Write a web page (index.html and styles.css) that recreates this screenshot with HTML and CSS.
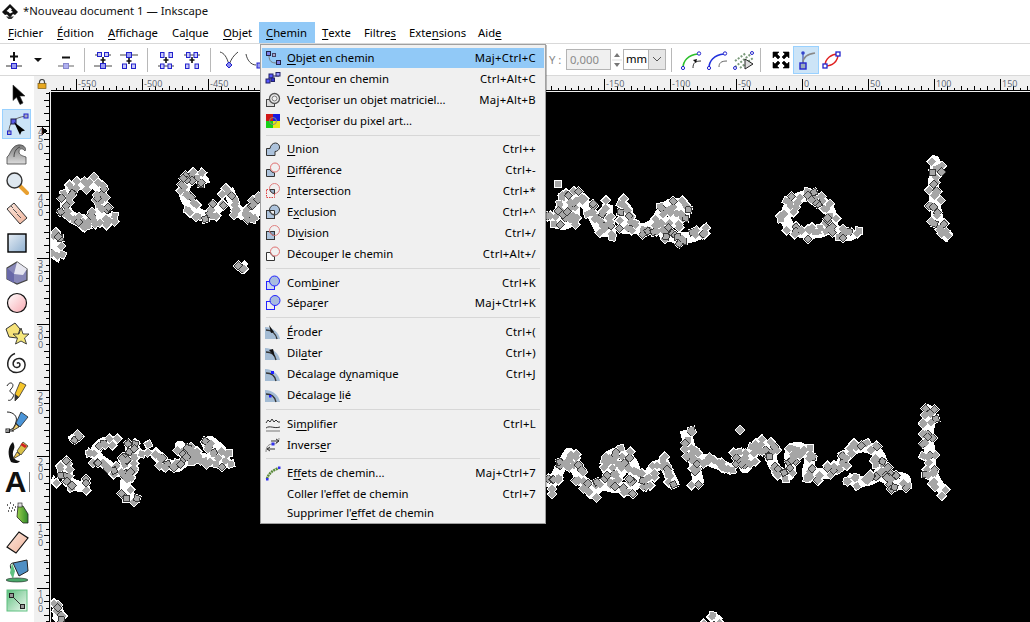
FILE: index.html
```html
<!DOCTYPE html>
<html lang="fr">
<head>
<meta charset="utf-8">
<title>*Nouveau document 1 — Inkscape</title>
<link rel="stylesheet" href="styles.css">
</head>
<body>
<svg class="defs" aria-hidden="true">
  <defs>
    <linearGradient id="gGrey" x1="0" y1="0" x2="0" y2="1"><stop offset="0" stop-color="#777"/><stop offset="1" stop-color="#ddd"/></linearGradient>
    <linearGradient id="gBlue" x1="0" y1="0" x2="1" y2="1"><stop offset="0" stop-color="#e6edf5"/><stop offset="1" stop-color="#8fb0d0"/></linearGradient>
    <linearGradient id="gPink" x1="0" y1="0" x2="1" y2="1"><stop offset="0" stop-color="#fff"/><stop offset="1" stop-color="#f8a8b0"/></linearGradient>
    <linearGradient id="gPeach" x1="0" y1="0" x2="1" y2="1"><stop offset="0" stop-color="#fbe6dc"/><stop offset="1" stop-color="#f0b49c"/></linearGradient>
    <linearGradient id="gGreen" x1="0" y1="0" x2="1" y2="1"><stop offset="0" stop-color="#5fbf7f"/><stop offset="1" stop-color="#f0faf2"/></linearGradient>
    <linearGradient id="gCan" x1="0" y1="0" x2="1" y2="0"><stop offset="0" stop-color="#9ad04a"/><stop offset="1" stop-color="#2f8a2a"/></linearGradient>
  </defs>
</svg>

<header class="titlebar">
  <svg class="applogo" viewBox="0 0 16 15"><path d="M8 0L16 8 13 11 11 10 8 13.500 5 10.500 3 11 0 8Z" fill="#111"/><path d="M4.500 7L8 3.500 10 5.500 9 6.500 11 8 8 9.500 6.500 8Z" fill="#fff"/><path d="M4 12.500h8l-2.500 2.500h-3Z" fill="#333"/></svg>
  <span class="apptitle">*Nouveau document 1 — Inkscape</span>
</header>

<nav class="menubar">
  <span class="mb mb-fichier"><u>F</u>ichier</span>
  <span class="mb mb-edition"><u>É</u>dition</span>
  <span class="mb mb-affichage"><u>A</u>ffichage</span>
  <span class="mb mb-calque">Ca<u>l</u>que</span>
  <span class="mb mb-objet"><u>O</u>bjet</span>
  <div class="mb-open">
    <span class="mb mb-chemin"><u>C</u>hemin</span>
    <ul class="menu">
      <li class="item active"><svg class="mi" viewBox="0 0 16 16"><path d="M4 5C4 12 7 13 12 13" fill="none" stroke="#777"/><rect x="1.500" y="1.500" width="4" height="4" fill="#7a80e8" stroke="#224"/><rect x="11.500" y="10.500" width="4" height="4" fill="#7a80e8" stroke="#224"/><rect x="7.500" y="3.500" width="3" height="3" fill="#aac" stroke="#446"/></svg><span class="lbl"><u>O</u>bjet en chemin</span><span class="key">Maj+Ctrl+C</span></li>
      <li class="item"><svg class="mi" viewBox="0 0 16 16"><path d="M2 11L6 5H14" fill="none" stroke="#88a" stroke-width="2"/><rect x="4" y="3" width="4" height="4" fill="#55f" stroke="#226"/><rect x="11" y="1.500" width="4" height="3.500" fill="#99f" stroke="#226"/><rect x="1" y="8" width="4" height="4" fill="#55f" stroke="#226"/><rect x="6" y="7" width="3.500" height="3.500" fill="#33c" stroke="#226"/></svg><span class="lbl"><u>C</u>ontour en chemin</span><span class="key">Ctrl+Alt+C</span></li>
      <li class="item"><svg class="mi" viewBox="0 0 16 16"><rect x="1.500" y="7.500" width="8" height="7" fill="#ddd" stroke="#444"/><circle cx="9.500" cy="6.500" r="5" fill="#eee" stroke="#555" stroke-width="1.300"/><circle cx="9.500" cy="6.500" r="2.500" fill="none" stroke="#777"/></svg><span class="lbl">Vec<u>t</u>oriser un objet matriciel...</span><span class="key">Maj+Alt+B</span></li>
      <li class="item"><svg class="mi" viewBox="0 0 16 16"><rect x="1" y="1" width="7" height="7" fill="#d01818"/><rect x="8" y="1" width="7" height="7" fill="#1818e0"/><rect x="1" y="8" width="7" height="7" fill="#18d018"/><rect x="8" y="8" width="7" height="7" fill="#e8e818"/><circle cx="8" cy="8" r="3.500" fill="none" stroke="#888"/></svg><span class="lbl">Vec<u>t</u>oriser du pixel art...</span></li>
      <li class="sep"></li>
      <li class="item"><svg class="mi" viewBox="0 0 16 16"><path d="M1.500 14.500V7.500H5C5.500 4 8 2 10.500 2 13 2 15 4.500 14.500 7 14 9 12 10.500 10 10.500V14.500Z" fill="#adc3dc" stroke="#333"/></svg><span class="lbl"><u>U</u>nion</span><span class="key">Ctrl++</span></li>
      <li class="item"><svg class="mi" viewBox="0 0 16 16"><path d="M1.500 14.500V7.500H5.200C5.600 9.500 7.500 10.800 9.500 10.800V14.500Z" fill="#adc3dc" stroke="#333"/><circle cx="10" cy="5.500" r="4.500" fill="none" stroke="#e07070"/></svg><span class="lbl"><u>D</u>ifférence</span><span class="key">Ctrl+-</span></li>
      <li class="item"><svg class="mi" viewBox="0 0 16 16"><rect x="1.500" y="6.500" width="8" height="8" fill="none" stroke="#e04040" stroke-dasharray="1.500 1"/><circle cx="9.500" cy="5.500" r="5" fill="none" stroke="#e08080"/><path d="M5 6.500H9.500V10.500C7 10.500 5 8.500 5 6.500Z" fill="#9cb0c8" stroke="#333"/></svg><span class="lbl"><u>I</u>ntersection</span><span class="key">Ctrl+*</span></li>
      <li class="item"><svg class="mi" viewBox="0 0 16 16"><rect x="1.500" y="6.500" width="8" height="8" fill="#adc3dc" stroke="#333"/><circle cx="9.500" cy="6" r="5" fill="#adc3dc" stroke="#333"/><path d="M5 6.500H9.500V10.500C7 10.500 5 8.500 5 6.500Z" fill="#f0f0f0" stroke="#333"/></svg><span class="lbl">E<u>x</u>clusion</span><span class="key">Ctrl+^</span></li>
      <li class="item"><svg class="mi" viewBox="0 0 16 16"><rect x="1.500" y="6.500" width="8" height="8" fill="#adc3dc" stroke="#333"/><path d="M5 6.500H9.500V10.500C7 10.500 5 8.500 5 6.500Z" fill="#8ba4c0" stroke="#333"/><circle cx="9.500" cy="5.500" r="5" fill="none" stroke="#e08080"/></svg><span class="lbl">Di<u>v</u>ision</span><span class="key">Ctrl+/</span></li>
      <li class="item"><svg class="mi" viewBox="0 0 16 16"><path d="M1.500 14.500V6.500H5.500C6 9 7.500 10.500 9.500 10.500V14.500Z" fill="#fafafa" stroke="#333"/><circle cx="10" cy="5.500" r="4.500" fill="none" stroke="#e07070"/></svg><span class="lbl">Décou<u>p</u>er le chemin</span><span class="key">Ctrl+Alt+/</span></li>
      <li class="sep"></li>
      <li class="item"><svg class="mi" viewBox="0 0 16 16"><rect x="1.500" y="6.500" width="8" height="8" fill="#cdd8ee" stroke="#22f"/><circle cx="9.500" cy="6" r="5" fill="#a8bce0" stroke="#22f"/></svg><span class="lbl">Com<u>b</u>iner</span><span class="key">Ctrl+K</span></li>
      <li class="item"><svg class="mi" viewBox="0 0 16 16"><rect x="1.500" y="6.500" width="8" height="8" fill="#f0f0f0" stroke="#22f"/><circle cx="10" cy="5.500" r="5" fill="#a8bce0" stroke="#22f"/></svg><span class="lbl">Sépa<u>r</u>er</span><span class="key">Maj+Ctrl+K</span></li>
      <li class="sep"></li>
      <li class="item"><svg class="mi" viewBox="0 0 16 16"><path d="M0 3C8 3 14 9 15 15H0Z" fill="#a4bcd4"/><path d="M1 6C7 6 11 10 12 15" fill="none" stroke="#333" stroke-width="1.300"/><path d="M4 1L9 8 6 9Z" fill="#111"/></svg><span class="lbl"><u>É</u>roder</span><span class="key">Ctrl+(</span></li>
      <li class="item"><svg class="mi" viewBox="0 0 16 16"><path d="M0 3C8 3 14 9 15 15H0Z" fill="#a4bcd4"/><path d="M1 7C6 7 10 10 11 15" fill="none" stroke="#333" stroke-width="1.300"/><path d="M10 12L4 5 8 4Z" fill="#111"/></svg><span class="lbl">Dil<u>a</u>ter</span><span class="key">Ctrl+)</span></li>
      <li class="item"><svg class="mi" viewBox="0 0 16 16"><path d="M0 3C8 3 14 9 15 15H0Z" fill="#a4bcd4"/><path d="M1 7C6 7 10 10 11 15" fill="none" stroke="#333" stroke-width="1.300"/><rect x="6" y="5" width="3" height="3" fill="#22f"/></svg><span class="lbl">Décalage d<u>y</u>namique</span><span class="key">Ctrl+J</span></li>
      <li class="item"><svg class="mi" viewBox="0 0 16 16"><path d="M0 3C8 3 14 9 15 15H0Z" fill="#a4bcd4"/><path d="M1 7C6 7 10 10 11 15" fill="none" stroke="#333" stroke-width="1.300"/><rect x="4" y="8" width="2.500" height="2.500" fill="#22f"/></svg><span class="lbl">Décalage <u>l</u>ié</span></li>
      <li class="sep"></li>
      <li class="item"><svg class="mi" viewBox="0 0 16 16"><path d="M1 7L3 4 5 6 7 3 9 6 11 4 13 6 15 6" fill="none" stroke="#333"/><path d="M1 12C5 9 9 13 15 11" fill="none" stroke="#333"/><path d="M1 15H15" stroke="#777"/></svg><span class="lbl">Si<u>m</u>plifier</span><span class="key">Ctrl+L</span></li>
      <li class="item"><svg class="mi" viewBox="0 0 16 16"><path d="M1 15C1 9 4 7 8 7S14 5 14 1" fill="none" stroke="#888"/><path d="M6 4H14M11 2L14 4 11 6M10 12H2M5 10L2 12 5 14" fill="none" stroke="#333"/><rect x="6.500" y="5.500" width="3" height="3" fill="#33e"/></svg><span class="lbl">Invers<u>e</u>r</span></li>
      <li class="sep"></li>
      <li class="item"><svg class="mi" viewBox="0 0 16 16"><path d="M2 14C3 9 8 5 14 3" fill="none" stroke="#5a8a3a" stroke-width="2.500" stroke-dasharray="2 .7"/><rect x="1" y="13" width="2.500" height="2.500" fill="#33e"/><rect x="13" y="1.500" width="2.500" height="2.500" fill="#33e"/></svg><span class="lbl">E<u>f</u>fets de chemin...</span><span class="key">Maj+Ctrl+7</span></li>
      <li class="item plain"><span class="mi-empty"></span><span class="lbl">Coller l'effet de chemin</span><span class="key">Ctrl+7</span></li>
      <li class="item plain"><span class="mi-empty"></span><span class="lbl">Supprimer l'<u>e</u>ffet de chemin</span></li>
    </ul>
  </div>
  <span class="mb mb-texte"><u>T</u>exte</span>
  <span class="mb mb-filtres">Filtre<u>s</u></span>
  <span class="mb mb-ext">Exte<u>n</u>sions</span>
  <span class="mb mb-aide">Aid<u>e</u></span>
</nav>

<section class="toolbar">
  <div class="tgroup">
    <svg class="tool" viewBox="0 0 24 24"><path d="M12 4V13M8 8.500H16" stroke="#111" stroke-width="2"/><path d="M4 18H20" stroke="#333"/><rect x="9.500" y="15.500" width="5" height="5" fill="#9a9cf0" stroke="#22c"/></svg>
    <svg class="tool" viewBox="0 0 24 24"><path d="M6 10H14L10 14Z" fill="#111"/></svg>
    <svg class="tool" viewBox="0 0 24 24"><path d="M8 9.500H16" stroke="#111" stroke-width="2"/><path d="M4 18H20" stroke="#666"/><rect x="9.500" y="15.500" width="5" height="5" fill="#b0b0f0" stroke="#88c"/></svg>
  </div>
  <i class="tsep"></i>
  <div class="tgroup">
    <svg class="tool" viewBox="0 0 24 24"><path d="M4 7H9M15 7H20M3 18H21" stroke="#444"/><rect x="6.500" y="4.500" width="4" height="4" fill="#c8c8f8" stroke="#22c"/><rect x="13.500" y="4.500" width="4" height="4" fill="#c8c8f8" stroke="#22c"/><path d="M12 9V15M9.500 12H14.500" stroke="#111" stroke-width="1.600"/><rect x="9.500" y="15.500" width="5" height="5" fill="#9a9cf0" stroke="#22c"/></svg>
    <svg class="tool" viewBox="0 0 24 24"><path d="M3 7H21" stroke="#444"/><rect x="9.500" y="4.500" width="5" height="5" fill="#9a9cf0" stroke="#22c"/><path d="M12 10V16M9.500 13H14.500" stroke="#111" stroke-width="1.600"/><rect x="5.500" y="16" width="4" height="4.500" fill="#c8c8f8" stroke="#22c"/><rect x="14.500" y="16" width="4" height="4.500" fill="#c8c8f8" stroke="#22c"/></svg>
  </div>
  <i class="tsep"></i>
  <div class="tgroup">
    <svg class="tool" viewBox="0 0 24 24"><rect x="6.500" y="4.500" width="3.500" height="5" fill="#c8c8f8" stroke="#22c"/><rect x="15" y="4.500" width="3.500" height="5" fill="#c8c8f8" stroke="#22c"/><path d="M12 9V15M9.500 12H14.500" stroke="#111" stroke-width="1.600"/><path d="M4 18H20" stroke="#444"/><rect x="6.500" y="16" width="3.500" height="4.500" fill="#c8c8f8" stroke="#22c"/><rect x="14" y="16" width="3.500" height="4.500" fill="#c8c8f8" stroke="#22c"/></svg>
    <svg class="tool" viewBox="0 0 24 24"><path d="M4 7H20" stroke="#444"/><rect x="6.500" y="4.500" width="3.500" height="5" fill="#c8c8f8" stroke="#22c"/><rect x="14" y="4.500" width="3.500" height="5" fill="#c8c8f8" stroke="#22c"/><path d="M12 9V15M9.500 12H14.500" stroke="#111" stroke-width="1.600"/><rect x="5.500" y="16" width="3.500" height="4.500" fill="#c8c8f8" stroke="#22c"/><rect x="15" y="16" width="3.500" height="4.500" fill="#c8c8f8" stroke="#22c"/></svg>
  </div>
  <i class="tsep"></i>
  <div class="tgroup">
    <svg class="tool" viewBox="0 0 24 24"><path d="M3 4C7 5 10 9 12 17 14 11 17 7 21 4" fill="none" stroke="#444"/><path d="M12 14L15 17 12 20 9 17Z" fill="#8a8cf0" stroke="#22c"/></svg>
    <svg class="tool" viewBox="0 0 24 24"><path d="M3 6C4 12 8 17 13 17" fill="none" stroke="#444"/><rect x="14" y="15" width="5" height="5" fill="#9a9cf0" stroke="#22c"/></svg>
  </div>
  <div class="yfield">
    <span class="ylabel">Y :</span>
    <span class="yinput">0,000</span>
    <span class="spin"><svg viewBox="0 0 10 20"><path d="M2 7L5 3 8 7Z" fill="#777"/><path d="M0 10H10" stroke="#ddd"/><path d="M2 13H8L5 17Z" fill="#777"/></svg></span>
    <span class="combo"><span class="unit">mm</span><span class="drop"><svg viewBox="0 0 16 18"><path d="M4 7L8 11 12 7" fill="none" stroke="#555"/></svg></span></span>
  </div>
  <i class="tsep tsep-y"></i>
  <div class="tgroup">
    <svg class="tool" viewBox="0 0 24 24"><path d="M3 20C3 13 8 7 18 6" fill="none" stroke="#2cc02c" stroke-width="1.600"/><path d="M13 20C13 15 15 13 21 13" fill="none" stroke="#333"/><path d="M13 12L17 11 16 15Z" fill="#111"/><circle cx="3" cy="20" r="1.600" fill="#fff" stroke="#22c"/><circle cx="19" cy="5.500" r="1.700" fill="#fff" stroke="#22c"/></svg>
    <svg class="tool" viewBox="0 0 24 24"><path d="M3 20C3 13 8 7 18 6" fill="none" stroke="#2233dd" stroke-width="1.600"/><path d="M13 19C13 15 15 13 21 13" fill="none" stroke="#666"/><circle cx="3" cy="20" r="1.600" fill="#fff" stroke="#22c"/><circle cx="19" cy="5.500" r="1.700" fill="#fff" stroke="#22c"/></svg>
    <svg class="tool" viewBox="0 0 24 24"><path d="M3 19L20 5M3 13L14 5M8 20L21 10" stroke="#7a9a7a" stroke-width="2" stroke-dasharray="2 1.500"/><path d="M13 11L21 16 13 21Z" fill="#ddd" stroke="#222"/><circle cx="20" cy="5" r="1.500" fill="#fff" stroke="#22c"/><circle cx="3" cy="20" r="1.500" fill="#fff" stroke="#22c"/></svg>
  </div>
  <i class="tsep tsep-r"></i>
  <svg class="tool tool-fit" viewBox="0 0 24 24"><path d="M4 4L10 4 8 6 11 9 9 11 6 8 4 10ZM20 4V10L18 8 15 11 13 9 16 6 14 4ZM4 20V14L6 16 9 13 11 15 8 18 10 20ZM20 20H14L16 18 13 15 15 13 18 16 20 14Z" fill="#000" stroke="#000" stroke-width=".6"/></svg>
  <span class="toggle"><svg class="tool" viewBox="0 0 24 24"><path d="M9 18V6" stroke="#2233aa"/><path d="M9 15C9 9 14 6 21 5" fill="none" stroke="#888" stroke-width="1.600"/><circle cx="9" cy="5" r="1.800" fill="#3344cc"/><rect x="6" y="15" width="6" height="6" fill="#9ab" stroke="#22c" stroke-width="1.400"/></svg></span>
  <svg class="tool tool-last" viewBox="0 0 24 24"><path d="M5 18C5 10 12 6 18 6M5 18C12 18 18 14 18 6" fill="none" stroke="#e02020" stroke-width="1.500"/><rect x="3" y="16" width="4" height="4" fill="#fff" stroke="#22c" stroke-width="1.300"/><rect x="16" y="4" width="4" height="4" fill="#fff" stroke="#22c" stroke-width="1.300"/></svg>
</section>

<main class="workspace">
  <aside class="toolbox">
    <span class="box"><svg class="ti" viewBox="0 0 24 24"><path d="M8 3V18.500L11.500 15.300 15 22.500 18 21 14.800 14H20Z" fill="#000" stroke="#333" stroke-width=".6"/></svg></span>
    <span class="box on"><svg class="ti" viewBox="0 0 24 24"><path d="M4 20C4 11 8 6 21 4" fill="none" stroke="#666"/><rect x="6" y="7" width="5" height="5" fill="#5559e8" stroke="#224"/><rect x="19" y="2" width="4" height="4" fill="#aab" stroke="#22c"/><rect x="2.500" y="19" width="3.500" height="3.500" fill="#aab" stroke="#22c"/><path d="M9 10L20 18.500 16.500 19.500 15 23Z" fill="#000"/></svg></span>
    <span class="box"><svg class="ti" viewBox="0 0 24 24"><path d="M2 15C5 14 6 4 13 3 18 2 22 6 20 9 18 6 14 6 14 10 14 13 18 14 21 15V22H2Z" fill="url(#gGrey)" stroke="#444" stroke-width=".8"/><path d="M9 15C9 9 12 6 15 5" fill="none" stroke="#333" stroke-width=".8"/></svg></span>
    <span class="box"><svg class="ti" viewBox="0 0 24 24"><path d="M14 14L22 22" stroke="#e8a030" stroke-width="4" stroke-linecap="round"/><circle cx="9.500" cy="9.500" r="7.500" fill="#dfe8f0" stroke="#333" stroke-width="1.400"/></svg></span>
    <span class="box"><svg class="ti" viewBox="0 0 24 24"><path d="M2 8L9 2 22 17 15 23Z" fill="url(#gPeach)" stroke="#333"/><path d="M6 5L8 7M8 8L10 10M10 10L12 12M12 13L14 15M14 15L16 17" stroke="#555"/></svg></span>
    <span class="box"><svg class="ti" viewBox="0 0 24 24"><rect x="3" y="3" width="18" height="18" fill="url(#gBlue)" stroke="#000" stroke-width="1.400"/></svg></span>
    <span class="box"><svg class="ti" viewBox="0 0 24 24"><path d="M2 7L12 1 22 8V19L12 23 2 18Z" fill="#8888b8" stroke="#444" stroke-width="1.200"/><path d="M12 1L22 8 18 14 9 13Z" fill="#e6e6f0"/><path d="M9 13V22L2 18V7Z" fill="#6868a8"/></svg></span>
    <span class="box"><svg class="ti" viewBox="0 0 24 24"><circle cx="12" cy="12" r="9.500" fill="url(#gPink)" stroke="#111" stroke-width="1.200"/></svg></span>
    <span class="box"><svg class="ti" viewBox="0 0 24 24"><path d="M1 8L10 2 15 8 12 17 4 16Z" fill="#f6e27a" stroke="#333"/><path d="M16 7L18 13 24 13 19.500 17 21.500 23 16 20 10.500 23 12.500 17 8 13 14 13Z" fill="#f6e87a" stroke="#333" stroke-width=".9"/></svg></span>
    <span class="box"><svg class="ti" viewBox="0 0 24 24"><path d="M12 12.500C13 11 15 12 15 14 14.500 17 10 17.500 8.500 14.500 7 10 11 7 15 7.500 20 8.500 21 14 19.500 17 17 22 9 23 5 19 .5 14 3 5 10 2.500" fill="none" stroke="#222" stroke-width="1.500"/></svg></span>
    <span class="box"><svg class="ti" viewBox="0 0 24 24"><path d="M2 6C5 0 11 4 6 9 2 13 11 13 8 17 7 20 4 21 3 20" fill="none" stroke="#222"/><path d="M15 2L21 5 14 17 10 21 10 14Z" fill="#f5c52a" stroke="#333" stroke-width=".8"/><path d="M10 14L14 17 10 21Z" fill="#333"/></svg></span>
    <span class="box"><svg class="ti" viewBox="0 0 24 24"><path d="M2 2C8 2 13 6 11 12 10 16 8 19 5 20" fill="none" stroke="#222"/><rect x="1" y="19" width="3.500" height="3.500" fill="#fff" stroke="#222"/><path d="M9 21H2" stroke="#222"/><path d="M16 2L23 7 15 17 11 13Z" fill="#4a94d8" stroke="#222" stroke-width=".8"/><path d="M11 14L14 17 7 21Z" fill="#f0d070" stroke="#222" stroke-width=".8"/></svg></span>
    <span class="box"><svg class="ti" viewBox="0 0 24 24"><path d="M8 2C2 7 3 16 6 22 10 24 14 23 15 21 9 21 6 15 9 9 10 7 9 4 8 2Z" fill="#111"/><path d="M18 2L23 6 16 15 12 11Z" fill="#d8c048" stroke="#222" stroke-width=".7"/><path d="M17 3L22 6 20 8 15.500 5Z" fill="#d02020"/><path d="M12 12L15 15 8 19Z" fill="#f0c850" stroke="#222" stroke-width=".7"/></svg></span>
    <span class="box"><span class="ti-a">A</span><i class="ti-cursor"></i></span>
    <span class="box"><svg class="ti" viewBox="0 0 24 24"><path d="M2 5H3M5 3H6M8 5H9M4 8H5M7 8H8M10 7H11M3 11H4M6 11H7M9 10H10" stroke="#333" stroke-width="1.300"/><path d="M13 6H18L23 14V23L18 23 12 17Z" fill="url(#gCan)" stroke="#222" stroke-width=".8"/><rect x="13" y="3" width="4" height="4" fill="#ddd" stroke="#333" stroke-width=".7"/></svg></span>
    <span class="box"><svg class="ti" viewBox="0 0 24 24"><path d="M2 17L14 2 23 8 11 23Z" fill="url(#gPeach)" stroke="#111" stroke-width="1.200"/></svg></span>
    <span class="box"><svg class="ti" viewBox="0 0 24 24"><path d="M8 4L22 1 23 12 14 17Z" fill="#4f8fc4" stroke="#222"/><path d="M8 4C5 4 4 8 8 13" fill="none" stroke="#222"/><path d="M7 4L5 14 8 20 10 12" fill="#5fc080"/><ellipse cx="12" cy="21" rx="11" ry="2" fill="#4aa86a" stroke="#222" stroke-width=".6"/></svg></span>
    <span class="box"><svg class="ti" viewBox="0 0 24 24"><rect x="2" y="1" width="20" height="21" fill="url(#gGreen)" stroke="#5fc080"/><path d="M7 7L17 17" stroke="#333"/><rect x="4.500" y="4.500" width="4" height="4" fill="#999" stroke="#222"/><rect x="15.500" y="15.500" width="4" height="4" fill="#999" stroke="#222"/></svg></span>
  </aside>

  <div class="board">
    <div class="corner"><svg class="lock" viewBox="0 0 10 10"><path d="M2.500 5V3A2.500 2.500 0 0 1 7.500 3V5" fill="none" stroke="#444" stroke-width="1.200"/><rect x="1" y="4.500" width="8" height="5" fill="#e8a820" stroke="#7a5a10" stroke-width=".7"/></svg></div>
    <svg class="hruler" viewBox="51 76 979 16">
      <defs>
        <pattern id="hticks" patternUnits="userSpaceOnUse" x="76" y="76" width="66" height="16">
          <path d="M.5 3V15M7.500 12V15M13.500 10V15M20.500 12V15M27.500 10V15M33.500 12V15M40.500 10V15M46.500 12V15M53.500 10V15M60.500 12V15" stroke="#000" fill="none"/>
        </pattern>
      </defs>
      <rect x="51" y="76" width="979" height="15" fill="url(#hticks)"/>
      <path d="M51 90.500H1030" stroke="#000"/>
      <g class="rl">
        <text x="78" y="87">-550</text><text x="144" y="87">-500</text><text x="210" y="87">-450</text>
        <text x="606" y="87">-150</text><text x="672" y="87">-100</text><text x="738" y="87">-50</text>
        <text x="804" y="87">0</text><text x="870" y="87">50</text><text x="936" y="87">100</text><text x="1002" y="87">150</text>
      </g>
    </svg>
    <svg class="vruler" viewBox="34 92 17 530">
      <defs>
        <pattern id="vticks" patternUnits="userSpaceOnUse" x="34" y="60" width="17" height="66">
          <path d="M3 .5H15M12 7.500H15M10 13.500H15M12 20.500H15M10 27.500H15M12 33.500H15M10 40.500H15M12 46.500H15M10 53.500H15M12 60.500H15" stroke="#000" fill="none"/>
        </pattern>
      </defs>
      <rect x="34" y="92" width="15" height="530" fill="url(#vticks)"/>
      <path d="M49.500 92V622" stroke="#000"/>
      <path d="M42 127L48 131 42 135Z" fill="#000"/>
      <g class="rl">
        <text x="38 38 38" y="134.500 142 150">450</text>
        <text x="38 38 38" y="200.500 208 216">400</text>
        <text x="38 38 38" y="266.500 274 282">350</text>
        <text x="38 38 38" y="332.500 340 348">300</text>
        <text x="38 38 38" y="398.500 406 414">250</text>
        <text x="38 38 38" y="464.500 472 480">200</text>
        <text x="38 38 38" y="530.500 538 546">150</text>
        <text x="38 38 38" y="596.500 604 612">100</text>
      </g>
    </svg>
    <svg id="canvas" class="canvas" viewBox="51 92 979 530"></svg>
  </div>
</main>
<script src="app.js"></script>
</body>
</html>
```
FILE: styles.css
```css
* { box-sizing: border-box; }
html, body { margin: 0; padding: 0; }
body {
  width: 1030px;
  height: 622px;
  overflow: hidden;
  background: #fff;
  color: #000;
  font: 11.3px/16px "Noto Sans", "Open Sans", sans-serif;
  display: flex;
  flex-direction: column;
}
.defs { position: absolute; width: 0; height: 0; }
u { text-underline-offset: 2px; text-decoration-thickness: 1px; }

.titlebar { height: 22px; display: flex; align-items: center; padding-left: 2px; flex: none; }
.applogo { width: 16px; height: 15px; margin-right: 5px; }
.apptitle { color: #111; }

.menubar { height: 22px; flex: none; display: flex; align-items: stretch; position: relative; border-bottom: 1px solid #d9d9d9; }
.mb { display: flex; align-items: center; height: 21px; white-space: pre; }
.mb-fichier { margin-left: 8px; width: 49px; }
.mb-edition { width: 51px; }
.mb-affichage { width: 64px; }
.mb-calque { width: 51px; }
.mb-objet { width: 36px; }
.mb-open { width: 56px; height: 21px; background: #91c9f7; padding-left: 7px; position: relative; z-index: 5; }
.mb-texte { margin-left: 7px; width: 42px; }
.mb-filtres { width: 45px; }
.mb-ext { width: 69px; }

.menu {
  position: absolute;
  left: 1px;
  top: 22px;
  width: 286px;
  height: 480px;
  margin: 0;
  padding: 2.5px 1px 0;
  list-style: none;
  background: #f0f0f0;
  border: 1px solid #a0a0a0;
  box-shadow: 1px 1px 0 rgba(0,0,0,.25);
}
.item { display: flex; align-items: center; height: 20.9px; padding: 0 8px 0 3px; white-space: pre; }
.item.plain { height: 19.6px; }
.item.active { background: #91c9f7; }
.mi { width: 16px; height: 16px; flex: none; margin-right: 6px; }
.mi-empty { width: 22px; flex: none; }
.key { margin-left: auto; letter-spacing: .3px; }
.sep { height: 1px; margin: 3.45px 4px; background: #d7d7d7; }

.toolbar { height: 32px; flex: none; display: flex; align-items: center; padding-left: 2px; border-bottom: 1px solid #d9d9d9; }
.tgroup { display: flex; gap: 2px; }
.tool { width: 24px; height: 24px; flex: none; }
.tsep { width: 1px; height: 24px; margin: 0 6px; background: #b8b8b8; flex: none; }
.yfield { display: flex; align-items: center; margin-left: 282px; height: 20px; }
.ylabel { width: 17px; color: #8a8a8a; }
.yinput { width: 45px; height: 21px; border: 1px solid #b4b4b4; background: #f0f0f0; color: #8a8a8a; padding: 1px 0 0 3px; line-height: 17px; }
.spin { width: 10px; height: 20px; margin: 0 1px; display: block; }
.spin svg { display: block; width: 10px; height: 20px; }
.combo { display: flex; width: 43px; height: 21px; border: 1px solid #b4b4b4; background: #fff; }
.unit { width: 26px; padding-left: 2px; line-height: 18px; }
.drop { flex: 1; background: #e6e6e6; border-left: 1px solid #b4b4b4; }
.drop svg { display: block; width: 16px; height: 18px; }
.tsep-y { margin: 0 8px 0 5px; }
.tsep-r { margin: 0 8px 0 4px; }
.toggle { width: 26px; height: 28px; margin: 0 1px 0 0; display: flex; align-items: center; justify-content: center; background: #cce4f7; border: 1px solid #99d1ff; }

.workspace { flex: 1; min-height: 0; display: flex; }
.toolbox { width: 34px; flex: none; display: flex; flex-direction: column; padding: 3px 0 0 2px; overflow: hidden; }
.box { width: 29px; height: 29.85px; flex: none; display: flex; align-items: center; justify-content: center; position: relative; border: 1px solid transparent; }
.box.on { background: #cce4f7; border-color: #99d1ff; }
.ti { width: 24px; height: 24px; display: block; }
.ti-a { font: bold 30px/24px "Liberation Sans", sans-serif; color: #111; margin-right: 2px; }
.ti-cursor { position: absolute; right: 0; top: 4px; width: 1px; height: 20px; background: #777; }

.board { flex: 1; min-width: 0; display: grid; grid-template-columns: 17px 1fr; grid-template-rows: 16px 1fr; background: #f0f0f0; }
.corner { display: flex; align-items: flex-start; padding: 3px 0 0 3px; }
.lock { width: 10px; height: 10px; display: block; }
.hruler, .vruler, .canvas { display: block; width: 100%; height: 100%; min-height: 0; }
.hruler, .vruler { shape-rendering: crispEdges; }
.canvas { background: #000; }
.rl text { font: 9px "Open Sans", sans-serif; fill: #5b6472; }
```
FILE: app.js
```js
// Draws the sketched strokes (nodes of a path being edited) on the canvas.
const strokes = [
  "M102 203C104 190 96 182 88 183 72 184 64 194 65 205 66 216 75 219 85 220 95 222 108 222 114 217",
  "M102 203C104 212 98 218 90 220",
  "M54 234C57 240 57 255 54 260",
  "M205 184C203 177 195 176 190 180 183 186 181 195 190 204L198 213C205 219 213 214 220 205",
  "M228 189L233 201C236 211 242 218 253 215 259 211 259 202 256 194",
  "M241 264L245 268",
  "M551 222L560 224C570 226 577 217 574 206 570 197 563 198 561 206 560 214 565 220 570 215",
  "M566 198L580 198 591 211 601 232 611 231C607 221 606 212 608 204",
  "M620 201L628 211 625 229 647 228",
  "M647 228L657 222C660 211 668 203 675 203 683 204 687 210 684 215 679 223 665 221 662 226 660 232 666 236 672 237 682 239 694 238 701 233L708 229",
  "M855 232C849 239 839 236 832 226 834 214 827 201 812 197 797 193 785 206 786 219 787 229 800 235 815 233 822 233 827 230 830 226",
  "M933 161C937 160 936 170 934 178 933 195 936 215 940 225 942 231 945 235 950 238",
  "M72 434L76 440",
  "M64 460L67 470 68 482 80 487 88 483",
  "M131 445L137 452 127 469C118 475 108 470 108 465 98 460 94 454 96 450 99 444 106 441 115 441",
  "M131 448C128 462 125 480 126 490L133 500",
  "M152 450L164 463 177 467 191 457 180 446 182 452 200 458 226 463 221 450 210 441 205 448",
  "M549 488L569 453 579 476 592 494 601 484",
  "M602 484C612 489 628 489 635 485 639 477 634 461 626 456 616 450 606 454 606 467 608 478 620 476 622 470",
  "M642 485L654 467 664 463 675 487",
  "M685 430L691 450 699 484M692 458L707 460 731 469",
  "M739 450L745 468C752 463 753 447 758 443 765 443 771 447 771 454 771 465 778 475 789 475 794 468 787 456 791 450 796 445 806 446 810 460 808 470 806 475 808 475L829 473 838 463",
  "M839 469C846 450 860 443 872 449 882 454 885 465 878 475 888 478 898 487 905 484 908 480 903 477 900 478M878 475C868 484 855 482 847 478",
  "M927 410C931 409 931 420 929 428 928 445 930 465 933 475 935 480 939 487 943 490",
  "M55 606C60 610 59 618 56 622",
  "M709 621C712 618 716 618 719 622",
  "M51 480L53 481"
];
const singles = [[558, 184], [740, 430]];
const NS = "http://www.w3.org/2000/svg";
const svg = document.getElementById("canvas");
let seed = 1337;
const rnd = () => (seed = (seed * 16807) % 2147483647) / 2147483647;
const mk = (name, attrs, parent) => {
  const el = document.createElementNS(NS, name);
  for (const k in attrs) el.setAttribute(k, attrs[k]);
  parent.appendChild(el);
  return el;
};
const white = mk("g", { fill: "#fff", "shape-rendering": "crispEdges" }, svg);
const grey = mk("g", { "shape-rendering": "crispEdges" }, svg);
const node = (x, y) => {
  const a = rnd() < .72 ? 45 : rnd() * 90;
  const t = `rotate(${a} ${x} ${y})`;
  mk("rect", { x: x - 4, y: y - 4, width: 8, height: 8, transform: t }, white);
  const dark = rnd() < .3;
  mk("rect", {
    x: x - 3, y: y - 3, width: 6, height: 6, transform: t,
    fill: "#a6a6a6", stroke: dark ? "#3a3a3a" : "none", "stroke-width": dark ? 1 : 0
  }, grey);
};
for (const d of strokes) {
  const p = mk("path", { d, fill: "none", stroke: "#fff", "stroke-width": 11, "stroke-linejoin": "round" }, white);
  const len = p.getTotalLength();
  for (let s = 0; s <= len; s += 2.8) {
    const pt = p.getPointAtLength(s);
    // Most nodes sit on the outer edges of the stroke, leaving white in the middle.
    const side = rnd() < .5 ? -1 : 1;
    const off = rnd() < .75 ? side * (4 + rnd() * 3) : (rnd() - .5) * 4;
    const off2 = (rnd() - .5) * 8;
    if (rnd() < .5) node(pt.x + off, pt.y + off2);
    else node(pt.x + off2, pt.y + off);
  }
}
singles.forEach(([x, y]) => node(x, y));
```
